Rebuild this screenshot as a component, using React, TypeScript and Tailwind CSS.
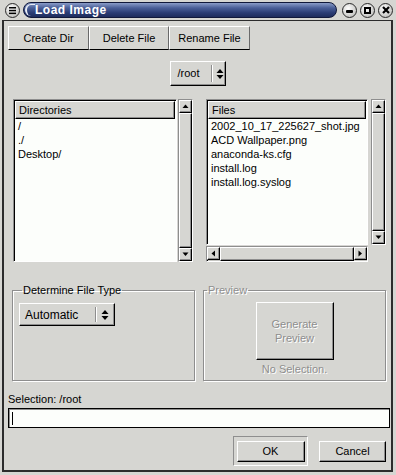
import React from "react";

const raised =
  "border border-t-white border-l-white border-r-black border-b-black shadow-[inset_-1px_-1px_0_#8e8e8e]";
const sunken =
  "border border-t-[#8e8e8e] border-l-[#8e8e8e] border-r-white border-b-white";
const disabledText = "text-[#8e8e8e] [text-shadow:1px_1px_0_#ffffff]";

function Arrow({ dir }: { dir: "up" | "down" | "left" | "right" }) {
  const pts: Record<string, string> = {
    up: "0.5,5 3.5,1.5 6.5,5",
    down: "0.5,1.5 3.5,5 6.5,1.5",
    left: "5,0.5 1.5,3.5 5,6.5",
    right: "1.5,0.5 5,3.5 1.5,6.5",
  };
  return (
    <svg width="7" height="7" viewBox="0 0 7 7">
      <polygon points={pts[dir]} fill="#000" />
    </svg>
  );
}

function ArrowBtn({ dir }: { dir: "up" | "down" | "left" | "right" }) {
  return (
    <div className={`w-[13px] h-[13px] shrink-0 flex items-center justify-center bg-[#d6d6d2] ${raised}`}>
      <Arrow dir={dir} />
    </div>
  );
}

function VScroll({ h }: { h: number }) {
  return (
    <div className={`w-[15px] flex flex-col bg-[#c6c6c2] ${sunken} shadow-[inset_1px_1px_0_#000]`} style={{ height: h }}>
      <ArrowBtn dir="up" />
      <div className={`flex-1 bg-[#d6d6d2] ${raised}`} />
      <ArrowBtn dir="down" />
    </div>
  );
}

function HScroll() {
  return (
    <div className={`h-[16px] w-[162px] flex flex-row bg-[#c6c6c2] ${sunken} shadow-[inset_1px_1px_0_#000]`}>
      <ArrowBtn dir="left" />
      <div className={`flex-1 bg-[#d6d6d2] ${raised}`} />
      <ArrowBtn dir="right" />
    </div>
  );
}

function UpDown() {
  return (
    <svg width="8" height="12" viewBox="0 0 8 12">
      <polygon points="0.5,5 4,1 7.5,5" fill="#000" />
      <polygon points="0.5,7 4,11 7.5,7" fill="#000" />
    </svg>
  );
}

function ListBox({
  title,
  items,
  w,
  h,
}: {
  title: string;
  items: string[];
  w: number;
  h: number;
}) {
  return (
    <div
      className={`bg-[#fcfefb] ${sunken} shadow-[inset_1px_1px_0_#000] flex flex-col p-[1px] overflow-hidden`}
      style={{ width: w, height: h }}
    >
      <div className={`h-[18px] shrink-0 bg-[#d6d6d2] ${raised} flex items-center pl-[3px]`}>{title}</div>
      <div className="flex flex-col pl-[3px]">
        {items.map((t) => (
          <div key={t} className="h-[14px] leading-[14px] whitespace-nowrap">
            {t}
          </div>
        ))}
      </div>
    </div>
  );
}

function Circle({ children }: { children: React.ReactNode }) {
  return (
    <div className="w-[15px] h-[15px] rounded-full border border-[#2a2a2a] bg-[radial-gradient(circle_at_40%_35%,#ffffff,#c9c9c6_70%,#9a9a98)] flex items-center justify-center">
      {children}
    </div>
  );
}

export default function App() {
  return (
    <div className="w-[396px] h-[475px] bg-[#d6d6d2] flex flex-col overflow-hidden text-[11px] text-black font-['Liberation_Sans',Arial,sans-serif]">
      {/* Title bar */}
      <div className="h-[20px] shrink-0 flex items-center pl-[5px] pr-[3px]">
        <Circle>
          <svg width="9" height="9" viewBox="0 0 9 9">
            <rect x="1" y="1" width="7" height="1.5" fill="#000" />
            <rect x="1" y="3.8" width="7" height="1.5" fill="#000" />
            <rect x="1" y="6.6" width="7" height="1.5" fill="#000" />
          </svg>
        </Circle>
        <div className="ml-[3px] flex-1 h-[16px] rounded-full border border-[#10183a] bg-[linear-gradient(to_bottom,#8a9cc8_0%,#4a5f98_35%,#2a3c74_70%,#1e2c5c_100%)] flex items-center relative overflow-hidden">
          <div className="absolute left-[1px] top-[1px] bottom-[1px] w-[10px] rounded-l-full border-l-2 border-t border-[#e8ecf4]" />
          <span className="ml-[11px] text-white font-bold text-[12px] tracking-[0.5px] leading-none">Load Image</span>
        </div>
        <div className="ml-[5px] flex gap-[3px]">
          <Circle>
            <div className="w-[7px] h-[3px] bg-black mt-[3px] rounded-[1px]" />
          </Circle>
          <Circle>
            <div className="w-[7px] h-[7px] border-2 border-black" />
          </Circle>
          <Circle>
            <svg width="8" height="8" viewBox="0 0 8 8">
              <path d="M1 1 L7 7 M7 1 L1 7" stroke="#000" strokeWidth="2.2" />
            </svg>
          </Circle>
        </div>
      </div>

      {/* Body */}
      <div className="flex-1 flex flex-col ml-[2px] mr-[3px] mb-[3px] border-l-2 border-r-2 border-b-2 border-t border-[#2c2c2c]">
        {/* Toolbar */}
        <div className="mt-[5px] ml-[4px] flex">
          {["Create Dir", "Delete File", "Rename File"].map((t, i) => (
            <div
              key={t}
              className={`h-[24px] flex items-center justify-center border-t border-l border-t-white border-l-white border-r border-r-[#6a6a6a] border-b border-b-black ${
                i === 1 ? "w-[80px]" : "w-[81px]"
              }`}
            >
              {t}
            </div>
          ))}
        </div>

        {/* Root combo */}
        <div className="mt-[11px] flex justify-center">
          <div className={`w-[56px] h-[25px] flex items-center ${raised}`}>
            <span className="ml-[7px] w-[33px]">/root</span>
            <div className="w-[2px] h-[17px] border-l border-l-[#8e8e8e] border-r border-r-white" />
            <div className="ml-[3px]">
              <UpDown />
            </div>
          </div>
        </div>

        {/* Lists */}
        <div className="mt-[13px] ml-[9px] flex">
          <div className="flex">
            <ListBox title="Directories" items={["/", "./", "Desktop/"]} w={164} h={163} />
            <div className="ml-[1px]">
              <VScroll h={163} />
            </div>
          </div>
          <div className="ml-[13px] flex flex-col">
            <div className="flex">
              <ListBox
                title="Files"
                items={[
                  "2002_10_17_225627_shot.jpg",
                  "ACD Wallpaper.png",
                  "anaconda-ks.cfg",
                  "install.log",
                  "install.log.syslog",
                ]}
                w={162}
                h={146}
              />
              <div className="ml-[3px]">
                <VScroll h={146} />
              </div>
            </div>
            <div className="mt-[1px]">
              <HScroll />
            </div>
          </div>
        </div>

        {/* Frames */}
        <div className="mt-[22px] ml-[8px] flex gap-[8px]">
          <fieldset className="w-[183px] h-[97px] border border-[#8e8e8e] shadow-[inset_1px_1px_0_#fff,1px_1px_0_#fff] px-[6px]">
            <legend className="ml-[3px] px-[1px] leading-[13px]">Determine File Type</legend>
            <div className={`mt-[6px] w-[96px] h-[23px] flex items-center ${raised}`}>
              <span className="ml-[5px] w-[70px] text-[12px]">Automatic</span>
              <div className="w-[2px] h-[15px] border-l border-l-[#8e8e8e] border-r border-r-white" />
              <div className="ml-[4px]">
                <UpDown />
              </div>
            </div>
          </fieldset>
          <fieldset className="w-[183px] h-[97px] border border-[#8e8e8e] shadow-[inset_1px_1px_0_#fff,1px_1px_0_#fff] flex flex-col items-center">
            <legend className={`ml-[3px] px-[1px] leading-[13px] ${disabledText}`}>Preview</legend>
            <div className="flex flex-col items-center">
              <div className={`mt-[5px] w-[78px] h-[58px] flex flex-col items-center justify-center leading-[14px] ${raised} ${disabledText}`}>
                <span>Generate</span>
                <span>Preview</span>
              </div>
              <div className={`mt-[2px] leading-[14px] ${disabledText}`}>No Selection.</div>
            </div>
          </fieldset>
        </div>

        {/* Selection */}
        <div className="mt-[12px] ml-[4px] leading-[12px]">Selection: /root</div>
        <div className="mt-[3px] ml-[4px] w-[382px] h-[20px] bg-[#fcfefb] border border-black shadow-[inset_1px_1px_0_#8e8e8e] flex items-center pl-[3px]">
          <div className="w-[1px] h-[13px] bg-black" />
        </div>

        {/* Buttons */}
        <div className="mt-[8px] flex justify-end items-center pr-[5px]">
          <div className="w-[75px] h-[30px] border border-t-[#8e8e8e] border-l-[#8e8e8e] border-r-white border-b-white flex items-center justify-center">
            <div className={`w-[68px] h-[21px] flex items-center justify-center ${raised}`}>OK</div>
          </div>
          <div className={`ml-[11px] w-[67px] h-[21px] flex items-center justify-center ${raised}`}>Cancel</div>
        </div>
      </div>
    </div>
  );
}
